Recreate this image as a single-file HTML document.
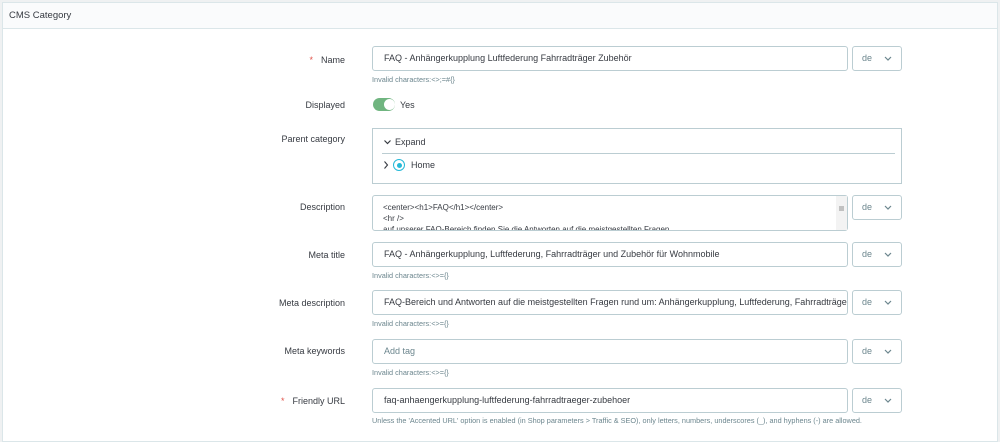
<!DOCTYPE html>
<html><head><meta charset="utf-8"><style>
*{box-sizing:border-box;margin:0;padding:0}
body{width:1000px;height:428px;overflow:hidden;background:#eff1f2;font-family:"Liberation Sans",sans-serif;color:#363a41;font-size:9px}
.card{position:absolute;left:2px;top:2px;width:996px;height:440px;background:#fff;border:1px solid #dbe6e9}
.hdr{height:26px;background:#fafbfc;border-bottom:1px solid #dbe6e9;padding:7px 6px;font-size:9.5px;color:#363a41}
.lbl{position:absolute;right:652px;text-align:right;font-size:9px;color:#363a41}
.req{color:#e1534a;margin-right:8px}
.inp{position:absolute;left:369px;width:476px;height:25px;border:1px solid #bbcdd2;border-radius:3px;padding:6px 11px;font-size:9px;white-space:nowrap;overflow:hidden;background:#fff}
.lang{position:absolute;left:849px;width:50px;height:25px;border:1px solid #bbcdd2;border-radius:3px;padding:6px 9px;font-size:9px;color:#6c868e}
.lang svg{position:absolute;right:9px;top:9px}
.help{position:absolute;left:369px;font-size:7.3px;color:#6c868e}
</style></head><body>
<div class="card">
<div class="hdr">CMS Category</div>

<div class="lbl" style="top:52px"><span class="req">*</span>Name</div>
<div class="inp" style="top:43px">FAQ - Anhängerkupplung Luftfederung Fahrradträger Zubehör</div>
<div class="lang" style="top:43px">de<svg width="8" height="6"><path d="M1 1l3 3 3-3" stroke="#6c868e" fill="none" stroke-width="1.2"/></svg></div>
<div class="help" style="top:72px">Invalid characters:&lt;&gt;;=#{}</div>

<div class="lbl" style="top:97px">Displayed</div>
<div style="position:absolute;left:370px;top:95px;width:22px;height:13px;border-radius:7px;background:#70b580"></div>
<div style="position:absolute;left:381px;top:96px;width:11px;height:11px;border-radius:50%;background:#fff"></div>
<div style="position:absolute;left:397px;top:97px">Yes</div>

<div class="lbl" style="top:131px">Parent category</div>
<div style="position:absolute;left:369px;top:125px;width:530px;height:56px;border:1px solid #bbcdd2">
<div style="position:absolute;left:9px;top:0;right:6px;height:25px;border-bottom:1px solid #bbcdd2;padding:8px 0 0 13px">Expand</div>
<svg style="position:absolute;left:11px;top:11px" width="7" height="5"><path d="M.5 .5l3 3 3-3" stroke="#363a41" fill="none" stroke-width="1.2"/></svg>
<svg style="position:absolute;left:11px;top:32px" width="5" height="8"><path d="M.5 .5l3 3.5-3 3.5" stroke="#363a41" fill="none" stroke-width="1.1"/></svg>
<div style="position:absolute;left:20px;top:30px;width:12px;height:12px;border-radius:50%;border:1.5px solid #25b9d7"></div>
<div style="position:absolute;left:23.5px;top:33.5px;width:5px;height:5px;border-radius:50%;background:#25b9d7"></div>
<div style="position:absolute;left:38px;top:31px">Home</div>
</div>

<div class="lbl" style="top:199px">Description</div>
<div class="inp" style="top:192px;height:36px;padding:6px 10px;font-size:8px;line-height:11px;white-space:normal">&lt;center&gt;&lt;h1&gt;FAQ&lt;/h1&gt;&lt;/center&gt;<br>&lt;hr /&gt;<br>auf unserer FAQ-Bereich finden Sie die Antworten auf die meistgestellten Fragen</div>
<div style="position:absolute;left:833px;top:193px;width:11px;height:34px;background:#f3f3f3"><div style="position:absolute;left:3px;top:10px;width:5px;height:5px;background:#c1c1c1"></div></div>
<div class="lang" style="top:192px">de<svg width="8" height="6"><path d="M1 1l3 3 3-3" stroke="#6c868e" fill="none" stroke-width="1.2"/></svg></div>

<div class="lbl" style="top:247px">Meta title</div>
<div class="inp" style="top:239px">FAQ - Anhängerkupplung, Luftfederung, Fahrradträger und Zubehör für Wohnmobile</div>
<div class="lang" style="top:239px">de<svg width="8" height="6"><path d="M1 1l3 3 3-3" stroke="#6c868e" fill="none" stroke-width="1.2"/></svg></div>
<div class="help" style="top:268px">Invalid characters:&lt;&gt;={}</div>

<div class="lbl" style="top:295px">Meta description</div>
<div class="inp" style="top:287px">FAQ-Bereich und Antworten auf die meistgestellten Fragen rund um: Anhängerkupplung, Luftfederung, Fahrradträger</div>
<div class="lang" style="top:287px">de<svg width="8" height="6"><path d="M1 1l3 3 3-3" stroke="#6c868e" fill="none" stroke-width="1.2"/></svg></div>
<div class="help" style="top:316px">Invalid characters:&lt;&gt;={}</div>

<div class="lbl" style="top:343px">Meta keywords</div>
<div class="inp" style="top:336px;color:#6c868e">Add tag</div>
<div class="lang" style="top:336px">de<svg width="8" height="6"><path d="M1 1l3 3 3-3" stroke="#6c868e" fill="none" stroke-width="1.2"/></svg></div>
<div class="help" style="top:365px">Invalid characters:&lt;&gt;={}</div>

<div class="lbl" style="top:393px"><span class="req">*</span>Friendly URL</div>
<div class="inp" style="top:385px">faq-anhaengerkupplung-luftfederung-fahrradtraeger-zubehoer</div>
<div class="lang" style="top:385px">de<svg width="8" height="6"><path d="M1 1l3 3 3-3" stroke="#6c868e" fill="none" stroke-width="1.2"/></svg></div>
<div class="help" style="top:413px">Unless the 'Accented URL' option is enabled (in Shop parameters &gt; Traffic &amp; SEO), only letters, numbers, underscores (_), and hyphens (-) are allowed.</div>
</div>
</body></html>
